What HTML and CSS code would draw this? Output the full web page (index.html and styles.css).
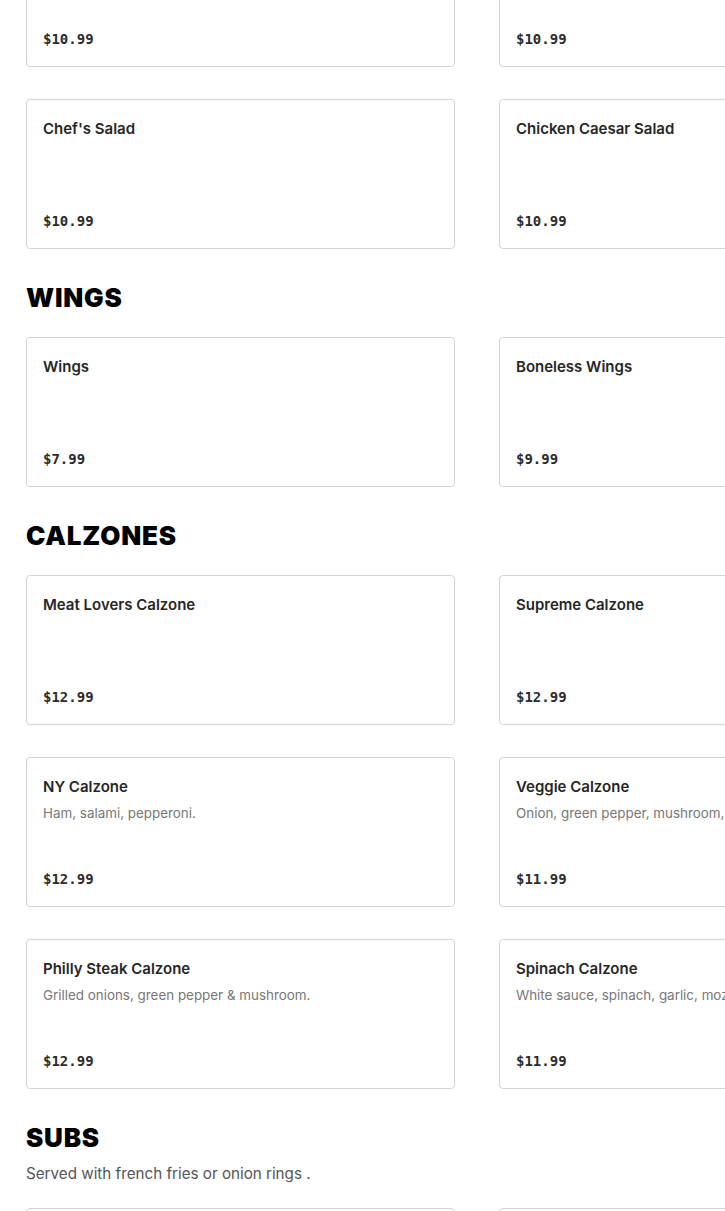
FILE: index.html
```html
<!DOCTYPE html>
<html lang="en">
<head>
<meta charset="utf-8">
<title>Menu</title>
<link rel="stylesheet" href="styles.css">
</head>
<body>
<main class="menu">
  <section class="section section-first">
    <div class="grid">
      <div class="card"><div class="title">Garden Salad</div><div class="price">$10.99</div></div>
      <div class="card"><div class="title">Greek Salad</div><div class="price">$10.99</div></div>
      <div class="card"><div class="title">Chef's Salad</div><div class="price">$10.99</div></div>
      <div class="card"><div class="title">Chicken Caesar Salad</div><div class="price">$10.99</div></div>
    </div>
  </section>

  <section class="section">
    <h2 class="heading">WINGS</h2>
    <div class="grid">
      <div class="card"><div class="title">Wings</div><div class="price">$7.99</div></div>
      <div class="card"><div class="title">Boneless Wings</div><div class="price">$9.99</div></div>
    </div>
  </section>

  <section class="section">
    <h2 class="heading">CALZONES</h2>
    <div class="grid">
      <div class="card"><div class="title">Meat Lovers Calzone</div><div class="price">$12.99</div></div>
      <div class="card"><div class="title">Supreme Calzone</div><div class="price">$12.99</div></div>
      <div class="card"><div class="title">NY Calzone</div><div class="desc">Ham, salami, pepperoni.</div><div class="price">$12.99</div></div>
      <div class="card"><div class="title">Veggie Calzone</div><div class="desc">Onion, green pepper, mushroom, black olives &amp; tomato.</div><div class="price">$11.99</div></div>
      <div class="card"><div class="title">Philly Steak Calzone</div><div class="desc">Grilled onions, green pepper &amp; mushroom.</div><div class="price">$12.99</div></div>
      <div class="card"><div class="title">Spinach Calzone</div><div class="desc">White sauce, spinach, garlic, mozzarella &amp; ricotta.</div><div class="price">$11.99</div></div>
    </div>
  </section>

  <section class="section">
    <h2 class="heading">SUBS</h2>
    <p class="subtitle">Served with french fries or onion rings .</p>
    <div class="grid">
      <div class="card"><div class="title">Italian Sub</div><div class="price">$10.99</div></div>
      <div class="card"><div class="title">Meatball Sub</div><div class="price">$10.99</div></div>
    </div>
  </section>
</main>
</body>
</html>
```

FILE: styles.css
```css
html, body {
  margin: 0;
  padding: 0;
  background: #ffffff;
  overflow-x: hidden;
}

body {
  font-family: Inter, "Liberation Sans", Arial, sans-serif;
  color: #2b2b2b;
}

.menu {
  width: 902px;
  padding-left: 26px;
}

.section {
  margin-top: 33px;
}

.section-first {
  margin-top: -83px;
}

.heading {
  margin: 0 0 23px 0;
  font-family: Inter, "Liberation Sans", Arial, sans-serif;
  font-weight: 900;
  font-size: 26px;
  line-height: 32px;
  letter-spacing: 0.8px;
  color: #000;
}

.subtitle {
  margin: -14px 0 23px 0;
  font-size: 15.2px;
  line-height: 22px;
  color: #555;
}

.grid {
  display: grid;
  grid-template-columns: 429px 429px;
  column-gap: 44px;
  row-gap: 32px;
}

.card {
  box-sizing: border-box;
  height: 150px;
  border: 1px solid #d4d4d4;
  border-radius: 4px;
  padding: 18px 16px 17px 16px;
  display: flex;
  flex-direction: column;
  background: #fff;
}

.title {
  font-size: 15px;
  line-height: 22px;
  font-weight: 600;
  color: #262626;
}

.desc {
  margin-top: 5px;
  font-size: 13.4px;
  line-height: 20px;
  color: #777;
  white-space: nowrap;
}

.price {
  margin-top: auto;
  font-family: "DejaVu Sans Mono", "Liberation Mono", monospace;
  font-size: 14px;
  line-height: 20px;
  font-weight: bold;
  color: #2b2b2b;
}
```
